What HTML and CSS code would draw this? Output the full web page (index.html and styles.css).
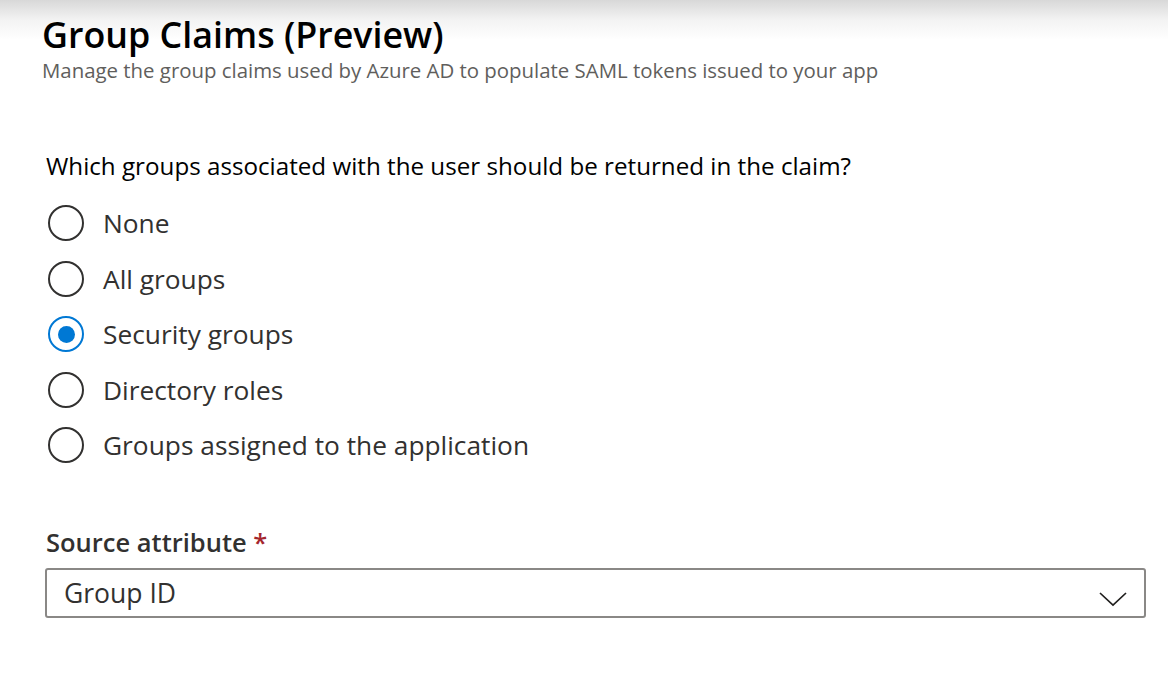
FILE: index.html
```html
<!DOCTYPE html>
<html>
<head>
<meta charset="utf-8">
<link rel="stylesheet" href="styles.css">
</head>
<body>
<div class="page">
  <header class="head">
    <h1 class="title">Group Claims (Preview)</h1>
    <p class="subtitle">Manage the group claims used by Azure AD to populate SAML tokens issued to your app</p>
  </header>
  <section class="question">
    <p class="q-text">Which groups associated with the user should be returned in the claim?</p>
    <div class="radios">
      <div class="radio"><span class="circle"></span><span class="r-label">None</span></div>
      <div class="radio"><span class="circle"></span><span class="r-label">All groups</span></div>
      <div class="radio checked"><span class="circle"></span><span class="r-label">Security groups</span></div>
      <div class="radio"><span class="circle"></span><span class="r-label">Directory roles</span></div>
      <div class="radio"><span class="circle"></span><span class="r-label">Groups assigned to the application</span></div>
    </div>
  </section>
  <section class="field">
    <div class="f-label">Source attribute <span class="req">*</span></div>
    <div class="dropdown">
      <span class="d-value">Group ID</span>
      <svg class="chev" width="30" height="18" viewBox="0 0 30 18"><path d="M2 3 L15 15 L28 3" fill="none" stroke="#201f1e" stroke-width="1.7"/></svg>
    </div>
  </section>
</div>
</body>
</html>
```
FILE: styles.css
```css
html, body { margin: 0; padding: 0; }
body {
  background: linear-gradient(#d8d8d8 0px, #f3f3f3 20px, #ffffff 40px) no-repeat;
  background-size: 100% 40px;
  background-color: #fff;
  font-family: "Open Sans", "Noto Sans", sans-serif;
  color: #201f1e;
  width: 1168px;
  height: 680px;
  overflow: hidden;
}
.page { padding: 12px 22px 0 42px; }
.title {
  margin: 0;
  font-size: 35.8px;
  font-weight: 600;
  line-height: 44px;
  color: #000;
}
.subtitle {
  margin: 2px 0 0;
  font-size: 20.4px;
  line-height: 24px;
  color: #605e5c;
}
.question { margin-top: 70px; padding-left: 4px; }
.q-text { margin: 0; font-size: 24.2px; line-height: 28px; color: #000; }
.radios { margin-top: 25px; display: flex; flex-direction: column; gap: 19.5px; }
.radio { display: flex; align-items: center; gap: 19px; height: 36px; }
.circle {
  width: 36px; height: 36px; box-sizing: border-box;
  border: 2px solid #323130; border-radius: 50%;
  margin-left: 2px;
  display: flex; align-items: center; justify-content: center;
}
.checked .circle { border-color: #0078d4; }
.checked .circle::after {
  content: ""; width: 17px; height: 17px; border-radius: 50%; background: #0078d4;
}
.r-label { font-size: 26.3px; color: #323130; line-height: 32px; }
.field { margin-top: 63px; padding-left: 4px; }
.f-label { font-size: 25.5px; font-weight: 600; color: #323130; line-height: 32px; }
.req { color: #a4262c; }
.dropdown {
  margin-top: 10px;
  margin-left: -1px;
  height: 50px; box-sizing: border-box;
  border: 2px solid #8a8886; border-radius: 3px;
  display: flex; align-items: center; justify-content: space-between;
  padding: 0 16px 0 17px;
}
.d-value { font-size: 26.5px; color: #323130; }
.chev { margin-top: 12px; }
```
